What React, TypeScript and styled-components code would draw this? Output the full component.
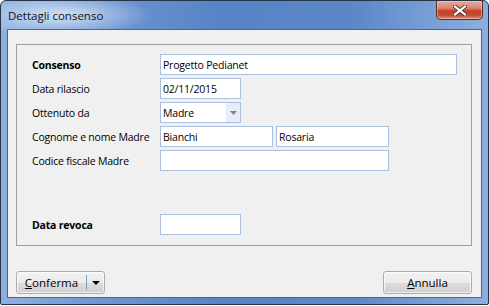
import React from 'react';
import styled, { createGlobalStyle } from 'styled-components';

const GlobalStyle = createGlobalStyle`
  html, body {
    margin: 0;
    padding: 0;
    background: #ffffff;
  }
  body {
    font-family: "Open Sans", "Liberation Sans", sans-serif;
    font-size: 11px;
  }
`;

const Window = styled.div`
  width: 487px;
  height: 303px;
  border: 1px solid #263447;
  border-radius: 6px 6px 2px 2px;
  background:
    radial-gradient(ellipse 90px 22px at 60px 14px, rgba(225, 236, 250, 0.85), rgba(225, 236, 250, 0) 100%),
    linear-gradient(to right, #8fb1e0 0%, #6f98d3 18%, #5784c6 45%, #5b87c8 72%, #8eafde 100%);
  display: flex;
  flex-direction: column;
  overflow: hidden;
`;

const TitleBar = styled.div`
  height: 28px;
  display: flex;
  align-items: flex-start;
  justify-content: space-between;
  padding-left: 7px;
  box-sizing: border-box;
`;

const Title = styled.span`
  font-size: 11.5px;
  color: #111;
  line-height: 28px;
  margin-top: 1px;
`;

const CloseButton = styled.div`
  width: 47px;
  height: 19px;
  margin-right: 5px;
  box-sizing: border-box;
  border: 1px solid #5a2a25;
  border-top: none;
  border-radius: 0 0 5px 5px;
  background: linear-gradient(to bottom, #e8a89a 0%, #d98673 40%, #c43f28 55%, #c94d35 80%, #e39480 100%);
  box-shadow: inset 0 0 0 1px rgba(255, 220, 210, 0.45);
  display: flex;
  align-items: center;
  justify-content: center;
`;

const Client = styled.div`
  flex: 1;
  margin: 0 6px 6px 6px;
  border: 1px solid #4a6790;
  background: #f0f0f0;
  display: flex;
  flex-direction: column;
  padding: 14px 9px 3px 8px;
`;

const GroupBox = styled.div`
  height: 202px;
  box-sizing: border-box;
  border: 1px solid #a0a0a0;
  padding: 9px 0 0 15px;
  display: flex;
  flex-direction: column;
  gap: 3px;
  font-size: 10.5px;
  letter-spacing: -0.2px;
`;

const Row = styled.div<{ $gapTop?: number }>`
  display: flex;
  align-items: center;
  height: 21px;
  margin-top: ${(p) => p.$gapTop ?? 0}px;
`;

const Label = styled.div<{ $bold?: boolean }>`
  width: 128px;
  flex-shrink: 0;
  color: #000;
  font-weight: ${(p) => (p.$bold ? 700 : 400)};
  white-space: nowrap;
`;

const Field = styled.div<{ $w: number }>`
  width: ${(p) => p.$w}px;
  height: 21px;
  box-sizing: border-box;
  border: 1px solid #abc0de;
  background: #fff;
  padding-left: 2px;
  display: flex;
  align-items: center;
  color: #000;
  white-space: nowrap;
  margin-right: 3px;
`;

const SelectBox = styled(Field)`
  justify-content: space-between;
`;

const SelectArrow = styled.div`
  width: 14px;
  height: 19px;
  background: #e8eef8;
  display: flex;
  align-items: center;
  justify-content: center;
`;

const Footer = styled.div`
  display: flex;
  justify-content: space-between;
  margin-top: 25px;
`;

const Button = styled.div`
  width: 89px;
  height: 23px;
  box-sizing: border-box;
  border: 1px solid #acacac;
  border-radius: 3px;
  background: linear-gradient(to bottom, #f2f2f2 0%, #ebebeb 50%, #dddddd 51%, #cfcfcf 100%);
  box-shadow: inset 0 0 0 1px rgba(255, 255, 255, 0.7);
  display: flex;
  align-items: center;
  justify-content: center;
  color: #000;
  font-size: 11.5px;
`;

const SplitButton = styled(Button)`
  justify-content: flex-start;
`;

const SplitMain = styled.div`
  width: 69px;
  text-align: center;
  border-right: 1px solid #7a9ccb;
  height: 15px;
  line-height: 15px;
`;

const SplitArrow = styled.div`
  flex: 1;
  display: flex;
  align-items: center;
  justify-content: center;
`;

const Key = styled.span`
  text-decoration: underline;
`;

const App: React.FC = () => {
  return (
    <>
      <GlobalStyle />
      <Window>
        <TitleBar>
          <Title>Dettagli consenso</Title>
          <CloseButton>
            <svg width="14" height="11" viewBox="0 0 14 11">
              <path d="M2 1.5 L12 9.5 M12 1.5 L2 9.5" stroke="#4a3a38" strokeWidth="4" strokeLinecap="square" />
              <path d="M2 1.5 L12 9.5 M12 1.5 L2 9.5" stroke="#ffffff" strokeWidth="2.2" strokeLinecap="square" />
            </svg>
          </CloseButton>
        </TitleBar>
        <Client>
          <GroupBox>
            <Row>
              <Label $bold>Consenso</Label>
              <Field $w={297}>Progetto Pedianet</Field>
            </Row>
            <Row>
              <Label>Data rilascio</Label>
              <Field $w={81}>02/11/2015</Field>
            </Row>
            <Row>
              <Label>Ottenuto da</Label>
              <SelectBox $w={81}>
                <span>Madre</span>
                <SelectArrow>
                  <svg width="7" height="4" viewBox="0 0 7 4">
                    <path d="M0 0 L7 0 L3.5 4 Z" fill="#6d87a8" />
                  </svg>
                </SelectArrow>
              </SelectBox>
            </Row>
            <Row>
              <Label>Cognome e nome Madre</Label>
              <Field $w={113}>Bianchi</Field>
              <Field $w={113}>Rosaria</Field>
            </Row>
            <Row>
              <Label>Codice fiscale Madre</Label>
              <Field $w={229} />
            </Row>
            <Row $gapTop={40}>
              <Label $bold>Data revoca</Label>
              <Field $w={81} />
            </Row>
          </GroupBox>
          <Footer>
            <SplitButton>
              <SplitMain>
                <Key>C</Key>onferma
              </SplitMain>
              <SplitArrow>
                <svg width="8" height="4" viewBox="0 0 8 4">
                  <path d="M0 0 L8 0 L4 4 Z" fill="#000" />
                </svg>
              </SplitArrow>
            </SplitButton>
            <Button>
              <span>
                <Key>A</Key>nnulla
              </span>
            </Button>
          </Footer>
        </Client>
      </Window>
    </>
  );
};

export default App;
